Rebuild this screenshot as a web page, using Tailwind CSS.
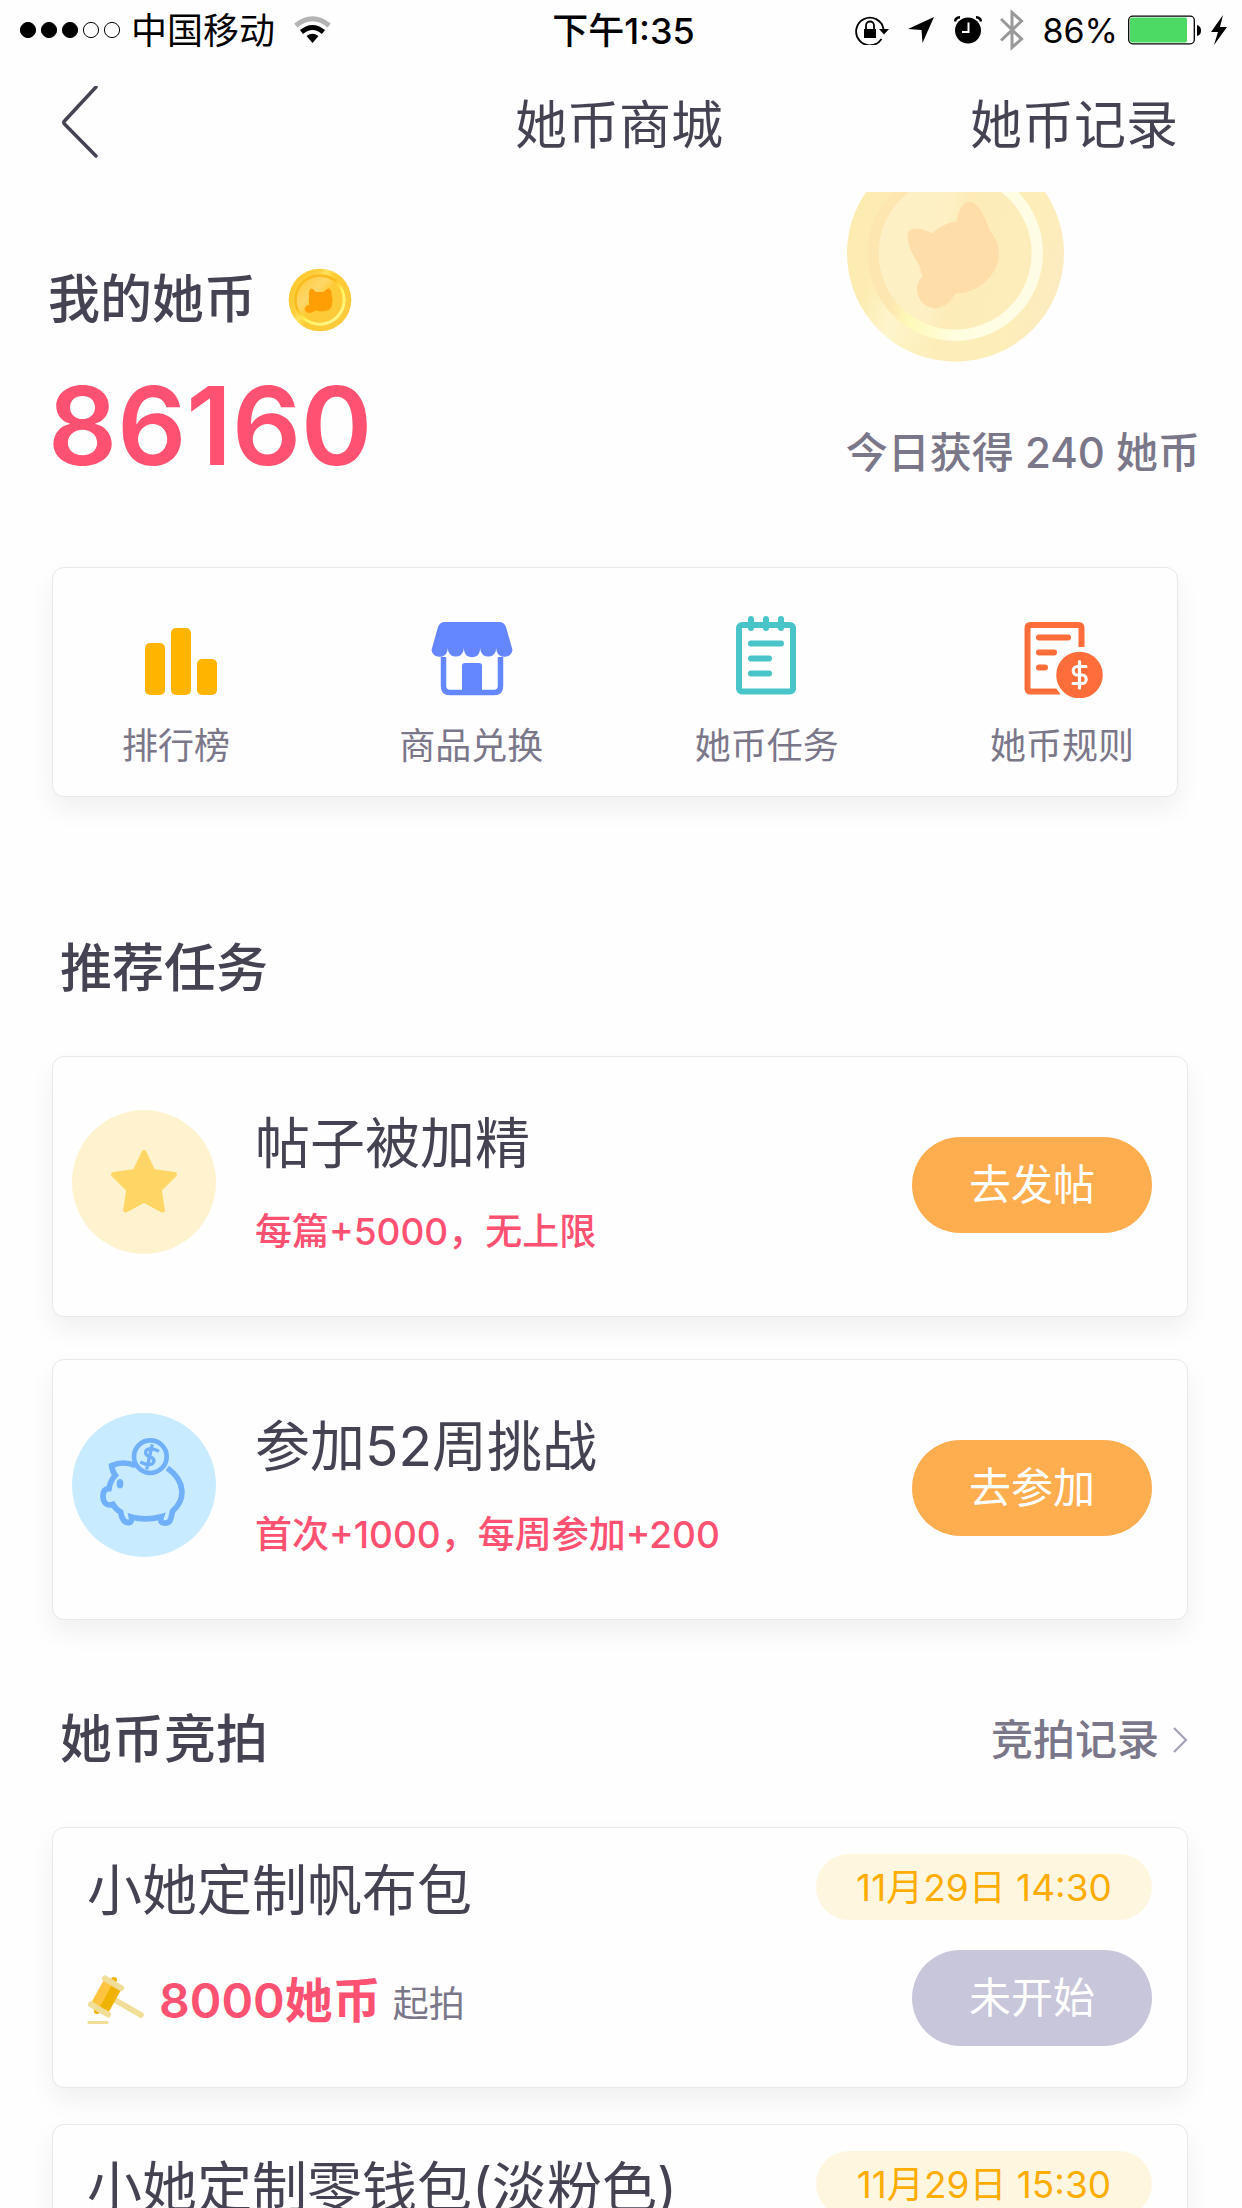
<!DOCTYPE html>
<html lang="zh-CN">
<head>
<meta charset="utf-8">
<meta name="viewport" content="width=device-width, initial-scale=1">
<title>她币商城</title>
<script src="https://cdn.jsdelivr.net/npm/@tailwindcss/browser@4"></script>
</head>
<body class="flex h-screen flex-col overflow-hidden bg-[#fefefe] font-['Inter','Noto_Sans_CJK_SC',sans-serif] text-[#454253]">

<!-- Status bar -->
<div class="grid h-[60px] shrink-0 grid-cols-[1fr_auto_1fr] items-center pr-[15px] pl-5 text-[36px] leading-none text-black">
  <div class="flex items-center">
    <svg class="mr-[10px] h-[18px] w-[101px]" viewBox="0 0 101 18"><g stroke="#000"><circle cx="8" cy="9" r="7.6"/><circle cx="29" cy="9" r="7.6"/><circle cx="50" cy="9" r="7.6"/><g fill="none"><circle cx="71" cy="9" r="7.6"/><circle cx="92" cy="9" r="7.6"/></g></g></svg>
    <span class="pt-[2px]">中国移动</span>
    <svg class="ml-[19px] h-7 w-[37px]" viewBox="0 0 37 28"><g fill="none" stroke-width="5"><path d="M1.800 9.500Q18.500-4 35.200 9.500" stroke="#b3b3b3"/><path d="M7.500 16Q18.500 7 29.500 16" stroke="#000"/></g><path d="M12.500 20Q18.500 15.500 24.500 20L18.500 27Z"/></svg>
  </div>
  <div class="pt-[2px] font-medium">下午1:35</div>
  <div class="flex items-center justify-end">
    <svg class="mr-[18px] h-[30px] w-[34px]" viewBox="0 0 34 30"><path d="M26.500 24A13.800 13.800 0 1 1 28.500 14" fill="none" stroke="#000" stroke-width="1.800"/><path d="M24 14H34L29 19.500Z"/><rect x="9" y="14" width="12" height="9"/><path d="M11 14V10.500a4 4 0 0 1 8 0V14" fill="none" stroke="#000" stroke-width="1.800"/></svg>
    <svg class="mr-[19px] h-7 w-7" viewBox="0 0 28 28"><path d="M27 1L15.500 27L14.500 14L1 13Z"/></svg>
    <svg class="mr-[18px] h-7 w-7" viewBox="0 0 28 28"><circle cx="14" cy="14.500" r="13"/><path d="M1 5.500Q1.500 1.500 6 1.200M27 5.500Q26.500 1.500 22 1.200" fill="none" stroke="#000" stroke-width="2.500"/><path d="M14.500 6.500V16H8" fill="none" stroke="#fff" stroke-width="2"/></svg>
    <svg class="mr-[18px] h-[42px] w-6" viewBox="0 0 24 42"><path d="M1 10L21.500 30L12 38.500V3.500L21.500 12L1 31.500" fill="none" stroke="#999" stroke-width="3"/></svg>
    <span class="pt-[2px] text-[34px]">86%</span>
    <svg class="mr-[10px] ml-[10px] h-[30px] w-[73px]" viewBox="0 0 73 30"><rect x=".7" y="1.200" width="65.600" height="27.600" rx="4" fill="#fff" stroke="#000" stroke-width="1.300"/><rect x="2" y="2.600" width="57" height="24.800" rx="2" fill="#4cd964"/><path d="M69 10Q73 11 73 15.500T69 21Z"/></svg>
    <svg class="h-[30px] w-4" viewBox="0 0 16 30"><path d="M12 0L0 17H7L3 30L16 12H9Z"/></svg>
  </div>
</div>

<!-- Navigation -->
<header class="grid h-[132px] shrink-0 grid-cols-[1fr_auto_1fr] items-center pr-16 pl-[60px] text-[52px] leading-none">
  <button type="button" aria-label="返回" class="w-10 pb-2">
    <svg class="h-[72px] w-10" viewBox="0 0 40 72" fill="none" stroke="#454253" stroke-width="3.500" stroke-linecap="round" stroke-linejoin="round"><path d="M36 2L4.500 36Q3 37.500 4.500 39L36 71" transform="translate(0 -1)"/></svg>
  </button>
  <h1>她币商城</h1>
  <a href="#records" class="justify-self-end">她币记录</a>
</header>

<main class="relative min-h-0 flex-1 overflow-hidden">
  <!-- Decorative coin behind the balance -->
  <svg class="absolute -top-[47px] right-[178px] size-[217px]" viewBox="142 -105 650 650">
    <defs>
      <linearGradient id="bo" x1="0" y1=".3" x2="1" y2=".6"><stop offset="0" stop-color="#fdecb2"/><stop offset=".18" stop-color="#fdecb2"/><stop offset=".32" stop-color="#fef5cc"/><stop offset=".55" stop-color="#fdedb8"/><stop offset=".8" stop-color="#fdeeb9"/><stop offset="1" stop-color="#fcebc0"/></linearGradient>
      <linearGradient id="br" x1="0" y1=".4" x2="1" y2=".6"><stop offset="0" stop-color="#fee6b0"/><stop offset=".2" stop-color="#fee6b0"/><stop offset=".32" stop-color="#fdfab8"/><stop offset=".6" stop-color="#fffde0"/><stop offset="1" stop-color="#fffce6"/></linearGradient>
      <linearGradient id="bi" x1="0" y1=".4" x2="1" y2=".6"><stop offset="0" stop-color="#fef0c6"/><stop offset=".4" stop-color="#fef0c4"/><stop offset=".52" stop-color="#fdecb8"/><stop offset="1" stop-color="#fdedbb"/></linearGradient>
    </defs>
    <circle cx="467" cy="219" r="325" fill="url(#bo)"/>
    <circle cx="466" cy="219" r="263" fill="url(#br)"/>
    <circle cx="466" cy="219" r="229" fill="url(#bi)"/>
    <path d="M396 160C380 148 330 132 324 162C320 195 345 235 360 258Q362 275 369 288C345 310 350 340 361 358C385 395 440 393 462 345Q465 339 478 339C545 335 600 275 597 215C596 185 582 167 569 151C560 120 540 75 515 66C490 58 474 95 471 123Q430 130 396 160Z" fill="#ffdda8"/>
  </svg>

  <!-- Balance -->
  <section class="relative flex items-end justify-between pt-[76px] pr-[42px] pl-12">
    <div>
      <div class="flex h-16 items-center gap-8">
        <h2 class="text-[52px] leading-none font-medium">我的她币</h2>
        <svg class="size-16" viewBox="0 0 192 192">
          <defs>
            <linearGradient id="so" x1="0" y1=".2" x2="1" y2=".8"><stop offset="0" stop-color="#fdc62e"/><stop offset=".28" stop-color="#ffcf3e"/><stop offset=".38" stop-color="#ffe25c"/><stop offset=".5" stop-color="#fecb34"/><stop offset="1" stop-color="#fdca3e"/></linearGradient>
            <linearGradient id="sr" x1=".1" y1="0" x2=".9" y2="1"><stop offset="0" stop-color="#fbb91c"/><stop offset=".4" stop-color="#fbbb1e"/><stop offset=".6" stop-color="#fff45e"/><stop offset="1" stop-color="#fff59a"/></linearGradient>
            <linearGradient id="si" x1="0" y1="0" x2="1" y2="1"><stop offset="0" stop-color="#ffc531"/><stop offset=".35" stop-color="#ffd76a"/><stop offset=".5" stop-color="#fecb36"/><stop offset="1" stop-color="#fdc93a"/></linearGradient>
          </defs>
          <circle cx="96" cy="96" r="94" fill="url(#so)"/><circle cx="96" cy="96" r="77" fill="url(#sr)"/><circle cx="95" cy="95" r="69" fill="url(#si)"/>
          <path d="M67 63Q72 58 83 72H108Q120 58 126 62Q131 68 131 83Q135 92 132 110C130 125 117 130 96 130Q87 130 82 127C70 140 50 135 50 122Q53 112 64 111Q61 95 63 85Q61 70 67 63Z" fill="#ff9f05"/>
        </svg>
      </div>
      <p class="mt-[38px] text-[108px] leading-[112px] font-semibold text-[#ff5171]">86160</p>
    </div>
    <p class="pb-2 text-[42px] leading-[42px] font-medium text-[#7b778a]">今日获得 240 她币</p>
  </section>

  <!-- Shortcuts -->
  <nav class="mt-[85px] mr-16 ml-[52px] flex h-[230px] justify-between rounded-xl border border-[#e8e8e8] bg-[#fefefe] pt-[46px] pr-[43px] pl-[51px] text-[36px] leading-none text-[#7b778a] shadow-[0_12px_26px_rgba(0,0,0,0.06)]">
    <a href="#rank" class="flex w-36 flex-col items-center gap-[30px]">
      <svg class="h-[84px] w-[84px]" viewBox="-5 0 84 84" fill="#ffb400"><rect x="6" y="29" width="20" height="52" rx="5"/><rect x="32" y="14" width="20" height="67" rx="5"/><rect x="58" y="45" width="20" height="36" rx="5"/></svg>
      排行榜
    </a>
    <a href="#exchange" class="flex w-36 flex-col items-center gap-[30px]">
      <svg class="h-[84px] w-[84px]" viewBox="-1 0 84 84" fill="#6487ff"><path d="M15 8H69Q74 8 76 13L82.500 36A8.200 8.200 0 0 1 66.600 37L66.200 34L65.800 37A8 8 0 0 1 50.600 37L50.200 34L49.800 37A8 8 0 0 1 34.200 37L33.800 34L33.400 37A8 8 0 0 1 18.200 37L17.800 34L17.400 37A8.200 8.200 0 0 1 1.500 36L8 13Q10 8 15 8Z"/><path d="M13.500 43V72Q13.500 78.500 20 78.500H64Q70.500 78.500 70.500 72V43" fill="none" stroke="#6487ff" stroke-width="5.500"/><path d="M32 78V52Q32 49 35 49H49Q52 49 52 52V78Z"/></svg>
      商品兑换
    </a>
    <a href="#tasks" class="flex w-36 flex-col items-center gap-[30px]">
      <svg class="h-[84px] w-[84px]" viewBox="-1 0 84 84" fill="none" stroke="#49c5c9" stroke-width="6" stroke-linecap="round"><rect x="13" y="11" width="54" height="66.500" rx="3"/><path d="M25 5V14M40 5V14M55 5V14M25 29.500H55M25 44.500H43M25 59.500H43"/></svg>
      她币任务
    </a>
    <a href="#rules" class="flex w-36 flex-col items-center gap-[30px]">
      <svg class="h-[84px] w-[84px]" viewBox="2 0 84 84" fill="none" stroke="#ff6d3a" stroke-width="6"><path d="M63.500 33V14Q63.500 11 60.500 11H12.500Q9.500 11 9.500 14V74.500Q9.500 77.500 12.500 77.500H42"/><path d="M21 23.500H50M21 38.500H36M21 53.500H27" stroke-linecap="round"/><circle cx="61.500" cy="61" r="25" fill="#ff6d3a" stroke="#fefefe" stroke-width="3.500"/><path d="M68 52.500H59.500A4.200 4.200 0 0 0 59.500 61H64A4.200 4.200 0 0 1 64 69.500H55M61.500 47.500V74" stroke="#fff" stroke-width="3.200" stroke-linecap="round"/></svg>
      她币规则
    </a>
  </nav>

  <!-- Recommended tasks -->
  <h2 class="mt-[146px] ml-[60px] text-[52px] leading-[52px] font-medium">推荐任务</h2>
  <ul class="mt-[61px] mr-[54px] ml-[52px] flex flex-col gap-[42px]">
    <li class="flex h-[261px] items-center rounded-xl border border-[#e8e8e8] bg-[#fefefe] pr-[35px] pb-1 pl-[19px] shadow-[0_12px_26px_rgba(0,0,0,0.06)]">
      <svg class="mb-[6px] size-36 shrink-0" viewBox="0 0 144 144"><circle cx="72" cy="72" r="72" fill="#fff2cf"/><path d="M72 42.500L81 61.500L102.500 64.500L87.300 79.500L90.300 100L72 90L53.700 100L56.700 79.500L41.500 64.500L63 61.500Z" fill="#ffd666" stroke="#ffd666" stroke-width="5" stroke-linejoin="round"/></svg>
      <div class="ml-[39px] flex-1 pb-1">
        <h3 class="text-[55px] leading-[54px]">帖子被加精</h3>
        <p class="mt-11 text-[37px] leading-9 font-medium text-[#ff5171]">每篇+5000，无上限</p>
      </div>
      <button type="button" class="h-24 w-60 rounded-full bg-[#ffae4f] text-[42px] leading-none text-white">去发帖</button>
    </li>
    <li class="flex h-[261px] items-center rounded-xl border border-[#e8e8e8] bg-[#fefefe] pr-[35px] pb-1 pl-[19px] shadow-[0_12px_26px_rgba(0,0,0,0.06)]">
      <svg class="mb-[6px] size-36 shrink-0" viewBox="36 38 432 432" fill="none" stroke="#70b0fb" stroke-linecap="butt">
        <circle cx="252" cy="254" r="216" fill="#c8ebff" stroke="none"/>
        <path d="M226 196Q190 180 155 196Q157 214 166 225Q150 242 147 265Q129 266 129 288C130 310 142 318 159 312Q168 328 182 335C185 355 192 368 208 367Q217 364 214 350Q258 362 304 349Q298 367 312 368C336 370 332 350 338 332C375 300 380 245 322 203" stroke-width="17"/>
        <ellipse cx="180" cy="250" rx="10" ry="14" fill="#70b0fb" stroke="none"/>
        <circle cx="271" cy="169" r="49" stroke-width="14"/>
        <path d="M297 153C275 140 255 145 257 159C259 173 283 166 282 182C279 198 258 194 241 185M277 132L260 207" stroke-width="10"/>
      </svg>
      <div class="ml-[39px] flex-1 pb-1">
        <h3 class="text-[55px] leading-[54px]">参加52周挑战</h3>
        <p class="mt-11 text-[37px] leading-9 font-medium text-[#ff5171]">首次+1000，每周参加+200</p>
      </div>
      <button type="button" class="h-24 w-60 rounded-full bg-[#ffae4f] text-[42px] leading-none text-white">去参加</button>
    </li>
  </ul>

  <!-- Auctions -->
  <div class="mt-[94px] mr-[54px] ml-[60px] flex items-center justify-between">
    <h2 class="text-[52px] leading-[52px] font-medium">她币竞拍</h2>
    <a href="#auctions" class="flex items-center gap-[13px] text-[42px] leading-none font-medium text-[#7b778a]">竞拍记录
      <svg class="h-7 w-4" viewBox="0 0 16 28" fill="none" stroke="#a5a2b8" stroke-width="2.200"><path d="M2 2L14 14L2 26"/></svg>
    </a>
  </div>
  <ul class="mt-[61px] mr-[54px] ml-[52px] flex flex-col gap-9">
    <li class="flex h-[261px] flex-col rounded-xl border border-[#e8e8e8] bg-[#fefefe] pt-[26px] pr-[35px] pl-[34px] shadow-[0_12px_26px_rgba(0,0,0,0.06)]">
      <div class="flex h-[66px] items-center justify-between">
        <h3 class="pt-[6px] text-[55px] leading-none whitespace-nowrap">小她定制帆布包</h3>
        <time class="flex h-[66px] w-[336px] items-center justify-center rounded-full bg-[#fff6e0] text-[37px] leading-none text-[#ffad00]">11月29日 14:30</time>
      </div>
      <div class="mt-[30px] flex h-24 items-center justify-between">
        <div class="flex items-center">
          <svg class="mr-[14px] h-[54px] w-[58px]" viewBox="0 0 58 54"><path d="M28 29L54 44" stroke="#f0dd97" stroke-width="5.500" stroke-linecap="round"/><path d="M2 51.500H20" stroke="#f0dd97" stroke-width="3.200" stroke-linecap="round"/><circle cx="27" cy="9" r="3" fill="#efb300"/><circle cx="10" cy="40" r="3" fill="#efb300"/><path d="M18 7L35 17L21 42L4 32Z" fill="#ffc53f"/><path d="M26 11.700L35 17L21 42L12.500 37Z" fill="#efb300"/><path d="M18 7.500L34 17M4 33.500L21 43.500" stroke="#f0dd97" stroke-width="6" stroke-linecap="round"/></svg>
          <p class="pt-[6px] text-[48px] leading-none font-semibold text-[#ff5171]">8000她币</p>
          <span class="ml-3 pt-3 text-[36px] leading-none text-[#7b778a]">起拍</span>
        </div>
        <button type="button" class="h-24 w-60 rounded-full bg-[#c8c6da] text-[42px] leading-none text-white">未开始</button>
      </div>
    </li>
    <li class="flex h-[261px] flex-col rounded-xl border border-[#e8e8e8] bg-[#fefefe] pt-[26px] pr-[35px] pl-[34px] shadow-[0_12px_26px_rgba(0,0,0,0.06)]">
      <div class="flex h-[66px] items-center justify-between">
        <h3 class="pt-[6px] text-[55px] leading-none whitespace-nowrap">小她定制零钱包(淡粉色)</h3>
        <time class="flex h-[66px] w-[336px] items-center justify-center rounded-full bg-[#fff6e0] text-[37px] leading-none text-[#ffad00]">11月29日 15:30</time>
      </div>
    </li>
  </ul>
</main>
</body>
</html>
